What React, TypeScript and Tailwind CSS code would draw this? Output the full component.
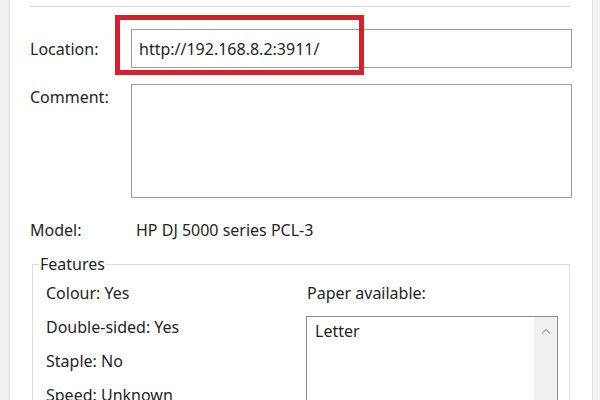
export default function App() {
  return (
    <div className="flex h-[400px] w-[600px] overflow-hidden bg-white font-['Noto_Sans',sans-serif] text-[16px] leading-[20px] text-[#242424]">
      <div className="w-[10px] shrink-0 border-r border-[#dddddd] bg-[#f0f0f0]" />

      <div className="relative w-[582px] shrink-0 pt-[6px]">
        <div className="ml-[20px] h-px w-[540px] bg-[#d6d6d6]" />

        <div className="mt-[22px] flex h-[39px] items-center">
          <div className="w-[121px] pl-[20px]">Location:</div>
          <div className="flex h-full w-[441px] items-center border border-[#9c9c9c] pl-[7px]">
            http://192.168.8.2:3911/
          </div>
        </div>

        <div className="mt-[16px] flex h-[114px]">
          <div className="w-[121px] pl-[20px] pt-[3px]">Comment:</div>
          <div className="h-full w-[441px] border border-[#9c9c9c]" />
        </div>

        <div className="mt-[22px] flex h-[20px] items-center">
          <div className="w-[126px] pl-[20px]">Model:</div>
          <div>HP DJ 5000 series PCL-3</div>
        </div>

        <fieldset className="ml-[22px] mt-[14px] h-[200px] w-[538px] border border-[#dcdcdc]">
          <legend className="ml-[6px] px-[1px]">Features</legend>
          <div className="flex pt-[9px]">
            <div className="flex w-[273px] flex-col gap-[14px] pl-[13px]">
              <div>Colour: Yes</div>
              <div>Double-sided: Yes</div>
              <div>Staple: No</div>
              <div>Speed: Unknown</div>
            </div>
            <div className="flex flex-col">
              <div className="pl-[1px]">Paper available:</div>
              <div className="mt-[13px] flex h-[100px] w-[252px] border border-[#8c8c8c]">
                <div className="flex-1 pl-[8px] pt-[4px]">Letter</div>
                <div className="flex w-[23px] justify-center bg-[#f0f0f0] pt-[11px]">
                  <svg width="10" height="6" viewBox="0 0 10 6" fill="none">
                    <polyline points="1,5.5 5,1.5 9,5.5" stroke="#a8a8a8" strokeWidth="1.2" />
                  </svg>
                </div>
              </div>
            </div>
          </div>
        </fieldset>

        <div className="absolute left-[105px] top-[15px] h-[60px] w-[249px] border-[5px] border-[#d6202c]" />
      </div>

      <div className="flex-1 border-l border-[#e2e2e2] bg-[#f3f3f3]" />
    </div>
  );
}
